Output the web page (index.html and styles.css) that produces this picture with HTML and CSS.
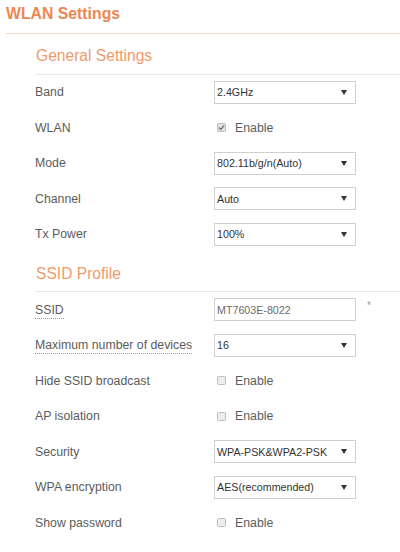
FILE: index.html
```html
<!DOCTYPE html>
<html>
<head>
<meta charset="utf-8">
<link rel="stylesheet" href="styles.css">
</head>
<body>
<div class="page">
  <h1 class="title">WLAN Settings</h1>

  <section class="section">
    <h2 class="section-title">General Settings</h2>
    <div class="row">
      <span class="label">Band</span>
      <div class="select"><span>2.4GHz</span><i class="arrow"></i></div>
    </div>
    <div class="row">
      <span class="label">WLAN</span>
      <label class="check"><span class="box checked"><svg viewBox="0 0 9 9" width="9" height="9"><path d="M2 4.6 L3.8 6.4 L7 2.6" fill="none" stroke="#666" stroke-width="1.3"/></svg></span><span class="check-text">Enable</span></label>
    </div>
    <div class="row">
      <span class="label">Mode</span>
      <div class="select"><span>802.11b/g/n(Auto)</span><i class="arrow"></i></div>
    </div>
    <div class="row">
      <span class="label">Channel</span>
      <div class="select"><span>Auto</span><i class="arrow"></i></div>
    </div>
    <div class="row">
      <span class="label">Tx Power</span>
      <div class="select"><span>100%</span><i class="arrow"></i></div>
    </div>
  </section>

  <section class="section">
    <h2 class="section-title second">SSID Profile</h2>
    <div class="row">
      <span class="label"><span class="help">SSID</span></span>
      <div class="input">MT7603E-8022</div>
      <span class="req">*</span>
    </div>
    <div class="row">
      <span class="label"><span class="help">Maximum number of devices</span></span>
      <div class="select"><span>16</span><i class="arrow"></i></div>
    </div>
    <div class="row">
      <span class="label">Hide SSID broadcast</span>
      <label class="check"><span class="box"></span><span class="check-text">Enable</span></label>
    </div>
    <div class="row">
      <span class="label">AP isolation</span>
      <label class="check"><span class="box"></span><span class="check-text">Enable</span></label>
    </div>
    <div class="row">
      <span class="label">Security</span>
      <div class="select"><span>WPA-PSK&amp;WPA2-PSK</span><i class="arrow"></i></div>
    </div>
    <div class="row">
      <span class="label">WPA encryption</span>
      <div class="select"><span>AES(recommended)</span><i class="arrow"></i></div>
    </div>
    <div class="row">
      <span class="label">Show password</span>
      <label class="check"><span class="box"></span><span class="check-text">Enable</span></label>
    </div>
  </section>
</div>
</body>
</html>
```

FILE: styles.css
```css
html, body {
  margin: 0;
  padding: 0;
  background: #ffffff;
}

body {
  font-family: "Liberation Sans", Arial, sans-serif;
  color: #5c5c5c;
  width: 400px;
  height: 552px;
  overflow: hidden;
}

.page {
  padding-left: 6px;
}

.title {
  margin: 0;
  height: 33px;
  line-height: 27px;
  font-size: 15.8px;
  font-weight: bold;
  color: #ec8753;
  border-bottom: 1px solid #f4d8c6;
  box-sizing: content-box;
}

.section {
  padding-left: 29px;
}

.section-title {
  margin: 0;
  padding-top: 12px;
  padding-bottom: 7.5px;
  line-height: 20px;
  font-size: 15.6px;
  font-weight: normal;
  color: #ef9a6c;
  border-bottom: 1px solid #e8e8e8;
  padding-left: 1px;
}

.section-title.second {
  padding-top: 11.5px;
}

.row {
  display: flex;
  align-items: center;
  height: 35.5px;
}

.label {
  width: 179px;
  flex: none;
  font-size: 12.3px;
  color: #5c5c5c;
}

.help {
  border-bottom: 1px dotted #9a9a9a;
  padding-bottom: 1px;
}

.select,
.input {
  width: 142px;
  height: 23px;
  box-sizing: border-box;
  border: 1px solid #d0d0d0;
  display: flex;
  align-items: center;
  justify-content: space-between;
  padding-left: 2px;
  padding-right: 8px;
  font-size: 10.7px;
  color: #333333;
  background: #ffffff;
}

.input {
  color: #6a6a6a;
}

.arrow {
  width: 0;
  height: 0;
  border-left: 3px solid transparent;
  border-right: 3px solid transparent;
  border-top: 5px solid #333333;
}

.req {
  margin-left: 11px;
  margin-top: -8px;
  font-size: 10px;
  color: #999999;
}

.check {
  display: flex;
  align-items: center;
  margin-left: 3px;
}

.box {
  width: 9px;
  height: 9px;
  box-sizing: border-box;
  border: 1px solid #bcbcbc;
  background: #ededed;
  border-radius: 1.5px;
  display: flex;
  align-items: center;
  justify-content: center;
  overflow: visible;
}

.box svg {
  display: block;
  flex: none;
}

.box.checked {
  background: #e0e0e0;
}

.check-text {
  margin-left: 9px;
  font-size: 12.3px;
  color: #5c5c5c;
}
```
